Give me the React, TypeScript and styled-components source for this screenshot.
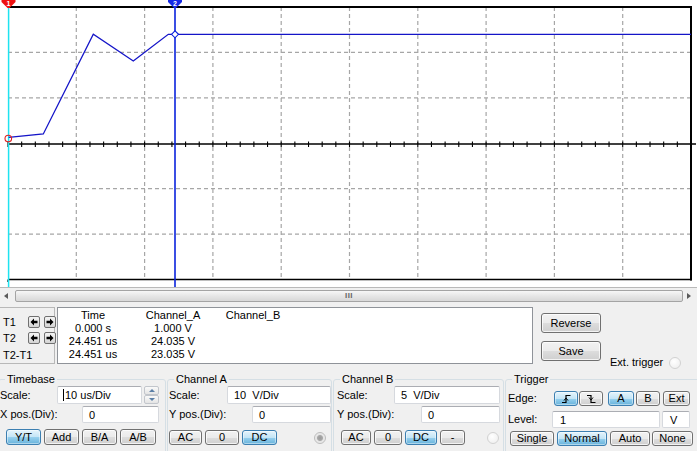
import React from 'react';
import styled, { createGlobalStyle } from 'styled-components';

const Global = createGlobalStyle`
  html, body { margin: 0; padding: 0; background: #f0f0f0; overflow: hidden; }
  body { font-family: "Liberation Sans", Arial, sans-serif; font-size: 11px; color: #000; }
  * { box-sizing: border-box; }
`;

const FONT = `"Liberation Sans", Arial, sans-serif`;

const Screen = styled.div`
  width: 697px;
  height: 451px;
  overflow: hidden;
  display: flex;
  flex-direction: column;
  background: #f0f0f0;
`;

const PlotArea = styled.div`
  flex: none;
  height: 287px;
  background: #fff;
  svg { display: block; }
`;

/* ---------- scrollbar ---------- */
const HScroll = styled.div`
  flex: none;
  height: 17px;
  border-top: 1px solid #b9b9b9;
  display: grid;
  grid-template-columns: 15px 668px 14px;
  align-items: center;
`;

const ScrollArrow = styled.span<{ $dir: 'left' | 'right' }>`
  justify-self: center;
  width: 0;
  height: 0;
  border-top: 3.5px solid transparent;
  border-bottom: 3.5px solid transparent;
  ${p => (p.$dir === 'left' ? 'border-right: 4px solid #5a5a5a; margin-left:-3px;' : 'border-left: 4px solid #5a5a5a; margin-left:-2px;')}
`;

const Thumb = styled.div`
  height: 12px;
  border: 1px solid #a4a4a4;
  border-radius: 2px;
  background: linear-gradient(#f7f7f7, #e6e6e6 50%, #d8d8d8);
  display: flex;
  align-items: center;
  justify-content: center;
`;

const Grip = styled.span`
  font: bold 8px ${FONT};
  letter-spacing: 0.5px;
  color: #666;
  line-height: 8px;
`;

/* ---------- readout row ---------- */
const ReadoutRow = styled.div`
  flex: none;
  height: 66px;
  padding-top: 3px;
  display: flex;
  align-items: flex-start;
`;

const CursorBox = styled.div`
  width: 56px;
  height: 57px;
  margin-left: -1px;
  border: 1px solid #b8b8b8;
  padding: 8px 0 0 3px;
  display: grid;
  grid-template-columns: 21px 12px 12px;
  grid-template-rows: 12px 12px 14px;
  column-gap: 4px;
  row-gap: 4px;
  align-items: center;
`;

const CursorLabel = styled.span<{ $span?: boolean }>`
  line-height: 12px;
  white-space: nowrap;
  ${p => (p.$span ? 'grid-column: 1 / 4;' : '')}
`;

const ArrowBtn = styled.span`
  width: 12px;
  height: 12px;
  border: 1px solid #707070;
  border-radius: 2px;
  background: linear-gradient(#f4f4f4, #e6e6e6 50%, #d4d4d4);
  display: flex;
  align-items: center;
  justify-content: center;
`;

const DataTable = styled.div`
  width: 476px;
  height: 57px;
  margin-left: 2px;
  background: #fff;
  border: 1px solid #8f9399;
  padding-top: 1px;
  display: grid;
  grid-template-columns: 70px 90px 70px;
  grid-auto-rows: 13px;
  align-content: start;
`;

const Cell = styled.div`
  text-align: center;
  line-height: 13px;
  white-space: nowrap;
`;

const ActionCol = styled.div`
  margin: 6px 0 0 8px;
  display: flex;
  flex-direction: column;
  gap: 8px;
`;

const ExtTrigger = styled.div`
  margin: 49px 0 0 9px;
  display: flex;
  align-items: center;
  gap: 6px;
  line-height: 13px;
  white-space: nowrap;
`;

/* ---------- buttons / inputs ---------- */
const Btn = styled.button<{ $w: number; $h: number; $active?: boolean }>`
  flex: none;
  width: ${p => p.$w}px;
  height: ${p => p.$h}px;
  margin: 0;
  padding: 0;
  font: 11px ${FONT};
  color: #000;
  line-height: 1;
  border: 1px solid ${p => (p.$active ? '#3c7fb1' : '#707070')};
  border-radius: 3px;
  box-shadow: inset 0 0 0 1px ${p => (p.$active ? 'rgba(255,255,255,0.45)' : 'rgba(255,255,255,0.75)')};
  background: ${p =>
    p.$active
      ? 'linear-gradient(#e5f4fc 0%, #c4e5f6 50%, #98d1ef 51%, #68b3db 100%)'
      : 'linear-gradient(#f2f2f2 0%, #ebebeb 50%, #dddddd 51%, #cfcfcf 100%)'};
  display: flex;
  align-items: center;
  justify-content: center;
`;

const Field = styled.div<{ $w: number; $h: number; $pl?: number }>`
  flex: none;
  width: ${p => p.$w}px;
  height: ${p => p.$h}px;
  background: #fff;
  border: 1px solid #d6d9de;
  border-top-color: #abadb3;
  border-radius: 2px;
  padding-left: ${p => p.$pl ?? 6}px;
  display: flex;
  align-items: center;
  white-space: pre;
`;

const Caret = styled.span`
  display: inline-block;
  width: 1px;
  height: 12px;
  background: #000;
  margin-right: 1px;
`;

const Spinner = styled.div`
  flex: none;
  width: 15px;
  height: 18px;
  margin-left: 2px;
  display: grid;
  grid-template-rows: 9px 9px;
`;

const SpinHalf = styled.div<{ $up?: boolean }>`
  border: 1px solid #c2c6cc;
  border-radius: 2px;
  background: linear-gradient(#fafafa, #e4e4e4);
  display: flex;
  align-items: center;
  justify-content: center;
  &::after {
    content: '';
    width: 0;
    height: 0;
    border-left: 3px solid transparent;
    border-right: 3px solid transparent;
    ${p => (p.$up ? 'border-bottom: 3px solid #5b7fa6;' : 'border-top: 3px solid #5b7fa6;')}
  }
`;

const Led = styled.span<{ $on?: boolean }>`
  flex: none;
  width: 12px;
  height: 12px;
  border-radius: 50%;
  border: 1px solid ${p => (p.$on ? '#bcbcbc' : '#d2d2d2')};
  background: ${p =>
    p.$on
      ? 'radial-gradient(circle, #9a9a9a 0, #a8a8a8 2.5px, #e4e4e4 3.5px, #f6f6f6 100%)'
      : 'radial-gradient(circle at 40% 35%, #ffffff, #ececec)'};
`;

/* ---------- controls row ---------- */
const ControlsRow = styled.div`
  flex: none;
  height: 81px;
  padding-top: 3px;
  margin-left: -2px;
  display: grid;
  grid-template-columns: 168px 165px 171px 195px;
  column-gap: 1px;
  align-items: start;
`;

const Group = styled.fieldset`
  margin: 0;
  padding: 0;
  min-width: 0;
  height: 92px;
  border: 1px solid #d5dfe5;
  border-radius: 3px;
`;

const Legend = styled.legend`
  margin-left: 6px;
  padding: 0 2px;
  font-size: 11px;
  line-height: 13px;
`;

const GroupBody = styled.div<{ $pl: number }>`
  padding-left: ${p => p.$pl}px;
  display: flex;
  flex-direction: column;
`;

const Row = styled.div<{ $h: number; $mt?: number; $gap?: number }>`
  height: ${p => p.$h}px;
  margin-top: ${p => p.$mt ?? 0}px;
  display: flex;
  align-items: center;
  gap: ${p => p.$gap ?? 0}px;
`;

const Label = styled.span<{ $w: number }>`
  flex: none;
  width: ${p => p.$w}px;
  line-height: 13px;
  white-space: nowrap;
`;

const Spacer = styled.span<{ $w: number }>`
  flex: none;
  width: ${p => p.$w}px;
`;

const LedSlot = styled.span<{ $mr: number }>`
  margin-left: auto;
  margin-right: ${p => p.$mr}px;
  display: flex;
`;

/* ---------- scope drawing ---------- */
const PW = 697;
const PH = 287;
const X0 = 8;
const X1 = 691;
const Y0 = 7;
const Y1 = 279.5;
const DX = (X1 - X0) / 10;
const DY = (Y1 - Y0) / 6;
const AXIS = 144;
const T2X = 175;

function Marker({ cx, color, label }: { cx: number; color: string; label: string }) {
  return (
    <g>
      <polygon
        points={`${cx - 7},0 ${cx + 7},0 ${cx + 7},2 ${cx + 1},8 ${cx - 1},8 ${cx - 7},2`}
        fill={color}
      />
      <text x={cx} y={6} fontSize={7} fontWeight="bold" fill="#fff" textAnchor="middle" fontFamily={FONT}>
        {label}
      </text>
    </g>
  );
}

function Scope() {
  const vGrid = Array.from({ length: 9 }, (_, i) => X0 + DX * (i + 1));
  const hGrid = [1, 2, 4, 5].map(k => Y0 + DY * k);
  const ticks = Array.from({ length: 51 }, (_, i) => X0 + (DX / 5) * i);
  const trace = [
    [8.7, 137.3],
    [43.3, 134],
    [93.3, 34.3],
    [133.3, 61],
    [168.3, 34.3],
    [691, 34.3],
  ]
    .map(p => p.join(','))
    .join(' ');
  return (
    <svg width={PW} height={PH} viewBox={`0 0 ${PW} ${PH}`}>
      {vGrid.map(x => (
        <line key={x} x1={x} x2={x} y1={Y0} y2={Y1} stroke="#a6a6a6" strokeWidth={1.2} strokeDasharray="4 3" />
      ))}
      {hGrid.map(y => (
        <line key={y} x1={X0} x2={X1} y1={y} y2={y} stroke="#a6a6a6" strokeWidth={1.2} strokeDasharray="4 3" />
      ))}
      <line x1={X0} x2={X1 + 1} y1={Y0} y2={Y0} stroke="#000" strokeWidth={2} />
      <line x1={X1} x2={X1} y1={Y0} y2={Y1 + 1} stroke="#000" strokeWidth={2} />
      <line x1={X0} x2={X1 + 1} y1={Y1} y2={Y1} stroke="#000" strokeWidth={1.6} />
      <line x1={X0} x2={X0} y1={Y1} y2={Y1 + 2.5} stroke="#000" strokeWidth={1.2} />
      <line x1={X0} x2={696} y1={AXIS} y2={AXIS} stroke="#000" strokeWidth={1.6} />
      {ticks.map(x => (
        <line key={x} x1={x} x2={x} y1={AXIS - 2.5} y2={AXIS + 3} stroke="#000" strokeWidth={1.1} />
      ))}
      <line x1={8.6} x2={8.6} y1={0} y2={PH} stroke="#1ee3f0" strokeWidth={1.5} />
      <line x1={T2X} x2={T2X} y1={0} y2={PH} stroke="#0a22dc" strokeWidth={1.6} />
      <polyline points={trace} fill="none" stroke="#1414c8" strokeWidth={1.3} />
      <polygon
        points={`${T2X - 3.5},34.3 ${T2X},30.8 ${T2X + 3.5},34.3 ${T2X},37.8`}
        fill="#fff"
        stroke="#0a22dc"
        strokeWidth={1.1}
      />
      <circle cx={8.3} cy={138.6} r={3.3} fill="none" stroke="#e02020" strokeWidth={1.1} />
      <Marker cx={8.5} color="#ee1111" label="1" />
      <Marker cx={T2X} color="#1428e6" label="2" />
    </svg>
  );
}

function Arrow({ dir }: { dir: 'left' | 'right' }) {
  return (
    <svg width={8} height={8} viewBox="0 0 8 8" style={dir === 'right' ? { transform: 'scaleX(-1)' } : undefined}>
      <path d="M0.5 4 L4 0.5 V2.7 H7.5 V5.3 H4 V7.5 Z" fill="#000" />
    </svg>
  );
}

function EdgeIcon({ rising }: { rising: boolean }) {
  return (
    <svg width={11} height={10} viewBox="0 0 11 10">
      {rising ? (
        <>
          <path d="M1 8.5 H5 V1.5 H9.5" fill="none" stroke="#000" strokeWidth={1.2} />
          <path d="M3 6.5 L5 4 L7 6.5" fill="none" stroke="#000" strokeWidth={1} />
        </>
      ) : (
        <>
          <path d="M1 1.5 H5 V8.5 H9.5" fill="none" stroke="#000" strokeWidth={1.2} />
          <path d="M3 3.5 L5 6 L7 3.5" fill="none" stroke="#000" strokeWidth={1} />
        </>
      )}
    </svg>
  );
}

export default function App() {
  return (
    <>
      <Global />
      <Screen>
        <PlotArea>
          <Scope />
        </PlotArea>

        <HScroll>
          <ScrollArrow $dir="left" />
          <Thumb>
            <Grip>III</Grip>
          </Thumb>
          <ScrollArrow $dir="right" />
        </HScroll>

        <ReadoutRow>
          <CursorBox>
            <CursorLabel>T1</CursorLabel>
            <ArrowBtn>
              <Arrow dir="left" />
            </ArrowBtn>
            <ArrowBtn>
              <Arrow dir="right" />
            </ArrowBtn>
            <CursorLabel>T2</CursorLabel>
            <ArrowBtn>
              <Arrow dir="left" />
            </ArrowBtn>
            <ArrowBtn>
              <Arrow dir="right" />
            </ArrowBtn>
            <CursorLabel $span>T2-T1</CursorLabel>
          </CursorBox>

          <DataTable>
            <Cell>Time</Cell>
            <Cell>Channel_A</Cell>
            <Cell>Channel_B</Cell>
            <Cell>0.000 s</Cell>
            <Cell>1.000 V</Cell>
            <Cell />
            <Cell>24.451 us</Cell>
            <Cell>24.035 V</Cell>
            <Cell />
            <Cell>24.451 us</Cell>
            <Cell>23.035 V</Cell>
            <Cell />
          </DataTable>

          <ActionCol>
            <Btn $w={60} $h={20}>Reverse</Btn>
            <Btn $w={60} $h={20}>Save</Btn>
          </ActionCol>

          <ExtTrigger>
            Ext. trigger
            <Led />
          </ExtTrigger>
        </ReadoutRow>

        <ControlsRow>
          <Group>
            <Legend>Timebase</Legend>
            <GroupBody $pl={1}>
              <Row $h={18}>
                <Label $w={57}>Scale:</Label>
                <Field $w={85} $h={18} $pl={5}>
                  <Caret />10 us/Div
                </Field>
                <Spinner>
                  <SpinHalf $up />
                  <SpinHalf />
                </Spinner>
              </Row>
              <Row $h={17} $mt={2}>
                <Label $w={82}>X pos.(Div):</Label>
                <Field $w={77} $h={17}>0</Field>
              </Row>
              <Row $h={16} $mt={6} $gap={3}>
                <Spacer $w={3} />
                <Btn $w={35} $h={16} $active>Y/T</Btn>
                <Btn $w={35} $h={16}>Add</Btn>
                <Btn $w={35} $h={16}>B/A</Btn>
                <Btn $w={36} $h={16}>A/B</Btn>
              </Row>
            </GroupBody>
          </Group>

          <Group>
            <Legend>Channel A</Legend>
            <GroupBody $pl={1}>
              <Row $h={18}>
                <Label $w={58}>Scale:</Label>
                <Field $w={104} $h={18}>10  V/Div</Field>
              </Row>
              <Row $h={17} $mt={2}>
                <Label $w={83}>Y pos.(Div):</Label>
                <Field $w={79} $h={17}>0</Field>
              </Row>
              <Row $h={15} $mt={7} $gap={3}>
                <Btn $w={33} $h={15}>AC</Btn>
                <Btn $w={34} $h={15}>0</Btn>
                <Btn $w={35} $h={15} $active>DC</Btn>
                <LedSlot $mr={5}>
                  <Led $on />
                </LedSlot>
              </Row>
            </GroupBody>
          </Group>

          <Group>
            <Legend>Channel B</Legend>
            <GroupBody $pl={3}>
              <Row $h={18}>
                <Label $w={57}>Scale:</Label>
                <Field $w={106} $h={18}>5  V/Div</Field>
              </Row>
              <Row $h={17} $mt={2}>
                <Label $w={84}>Y pos.(Div):</Label>
                <Field $w={79} $h={17}>0</Field>
              </Row>
              <Row $h={15} $mt={7} $gap={3}>
                <Spacer $w={1} />
                <Btn $w={30} $h={15}>AC</Btn>
                <Btn $w={28} $h={15}>0</Btn>
                <Btn $w={32} $h={15} $active>DC</Btn>
                <Btn $w={25} $h={15}>-</Btn>
                <LedSlot $mr={4}>
                  <Led />
                </LedSlot>
              </Row>
            </GroupBody>
          </Group>

          <Group>
            <Legend>Trigger</Legend>
            <GroupBody $pl={2}>
              <Row $h={15} $mt={5}>
                <Label $w={46}>Edge:</Label>
                <Btn $w={24} $h={15} $active>
                  <EdgeIcon rising />
                </Btn>
                <Spacer $w={1} />
                <Btn $w={24} $h={15}>
                  <EdgeIcon rising={false} />
                </Btn>
                <Spacer $w={5} />
                <Btn $w={26} $h={15} $active>A</Btn>
                <Spacer $w={2} />
                <Btn $w={24} $h={15}>B</Btn>
                <Spacer $w={3} />
                <Btn $w={27} $h={15}>Ext</Btn>
              </Row>
              <Row $h={17} $mt={5}>
                <Label $w={44}>Level:</Label>
                <Field $w={108} $h={17} $pl={7}>1</Field>
                <Spacer $w={2} />
                <Field $w={28} $h={17} $pl={7}>V</Field>
              </Row>
              <Row $h={15} $mt={3}>
                <Spacer $w={2} />
                <Btn $w={44} $h={15}>Single</Btn>
                <Spacer $w={3} />
                <Btn $w={50} $h={15} $active>Normal</Btn>
                <Spacer $w={3} />
                <Btn $w={40} $h={15}>Auto</Btn>
                <Spacer $w={2} />
                <Btn $w={41} $h={15}>None</Btn>
              </Row>
            </GroupBody>
          </Group>
        </ControlsRow>
      </Screen>
    </>
  );
}
